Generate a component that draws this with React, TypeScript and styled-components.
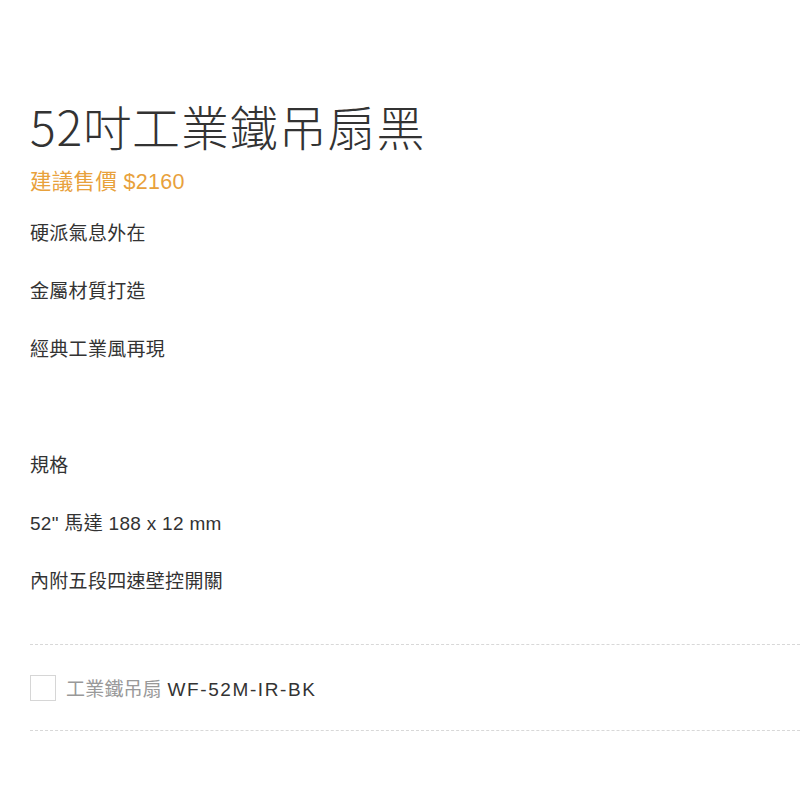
import styled, { createGlobalStyle } from "styled-components";

const GlobalStyle = createGlobalStyle`
  body {
    margin: 0;
    background: #ffffff;
    font-family: "Liberation Sans", "Noto Sans CJK TC", sans-serif;
  }
`;

const features = ["硬派氣息外在", "金屬材質打造", "經典工業風再現"];
const specs = ["規格", "52\" 馬達 188 x 12 mm", "內附五段四速壁控開關"];

export default function App() {
  return (
    <>
      <GlobalStyle />
      <Page>
        <Title>52吋工業鐵吊扇黑</Title>
        <Price>建議售價 $2160</Price>
        <Lines>
          {features.map(t => (
            <Line key={t}>{t}</Line>
          ))}
          <Line />
          {specs.map(t => (
            <Line key={t}>{t}</Line>
          ))}
        </Lines>
        <Options>
          <Option>
            <Box />
            <Label>
              工業鐵吊扇 <Code>WF-52M-IR-BK</Code>
            </Label>
          </Option>
        </Options>
      </Page>
    </>
  );
}

const Page = styled.div`
  display: flex;
  flex-direction: column;
  padding: 92px 0 0 30px;
`;

const Title = styled.h1`
  margin: 0;
  font-family: "Noto Sans CJK TC", sans-serif;
  font-size: 48px;
  font-weight: 300;
  line-height: 66px;
  color: #333333;
  letter-spacing: 0.9px;
`;

const Price = styled.div`
  margin-top: 12px;
  font-size: 21.5px;
  line-height: 24px;
  letter-spacing: 0.3px;
  color: #e8a13c;
`;

const Lines = styled.div`
  display: flex;
  flex-direction: column;
  margin-top: 11px;
`;

const Line = styled.p`
  margin: 0;
  height: 58px;
  font-size: 19px;
  line-height: 58px;
  letter-spacing: 0.3px;
  color: #333333;
  white-space: nowrap;
`;

const Options = styled.div`
  margin-top: 33px;
  border-top: 1px dashed #d8d8d8;
  border-bottom: 1px dashed #d8d8d8;
`;

const Option = styled.label`
  display: flex;
  align-items: center;
  gap: 10px;
  height: 85px;
`;

const Box = styled.span`
  width: 24px;
  height: 24px;
  border: 1px solid #d6d6d6;
  flex-shrink: 0;
`;

const Label = styled.span`
  font-size: 19px;
  letter-spacing: 0.2px;
  color: #999999;
  white-space: nowrap;
`;

const Code = styled.span`
  color: #333333;
  letter-spacing: 1.6px;
`;
